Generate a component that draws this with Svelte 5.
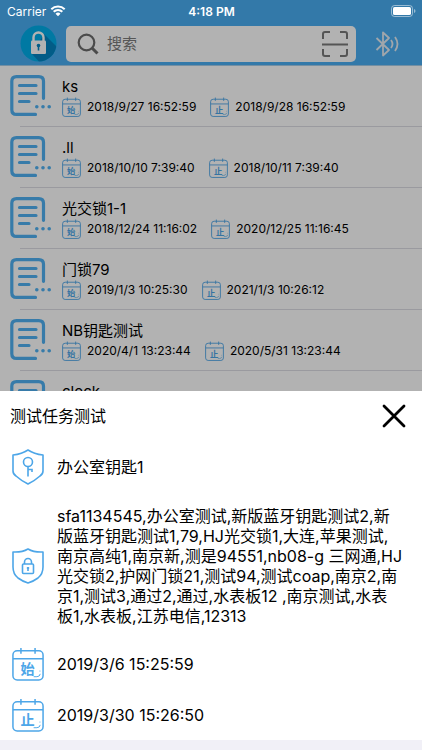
<script>
  const tasks = [
    { name: 'ks', start: '2018/9/27 16:52:59', end: '2018/9/28 16:52:59' },
    { name: '.ll', start: '2018/10/10 7:39:40', end: '2018/10/11 7:39:40' },
    { name: '光交锁1-1', start: '2018/12/24 11:16:02', end: '2020/12/25 11:16:45' },
    { name: '门锁79', start: '2019/1/3 10:25:30', end: '2021/1/3 10:26:12' },
    { name: 'NB钥匙测试', start: '2020/4/1 13:23:44', end: '2020/5/31 13:23:44' },
    { name: 'clock' }
  ];
  const locks = [
    'sfa1134545,办公室测试,新版蓝牙钥匙测试2,新',
    '版蓝牙钥匙测试1,79,HJ光交锁1,大连,苹果测试,',
    '南京高纯1,南京新,测是94551,nb08-g 三网通,HJ',
    '光交锁2,护网门锁21,测试94,测试coap,南京2,南',
    '京1,测试3,通过2,通过,水表板12 ,南京测试,水表',
    '板1,水表板,江苏电信,12313'
  ].join('\n');
</script>

{#snippet calendar(mark)}
  <svg class="calendar" viewBox="0 0 34 36" aria-hidden="true">
    <rect x="1" y="4" width="32" height="31" rx="4.5" />
    <path d="M1 12.500H33M9.500 1v6M24.500 1v6" />
    <path class="thin" d="M23 31.500h3.500q3 0 3.500-3M29.700 26v-1" />
    <text x="16.500" y="28.500" text-anchor="middle">{mark}</text>
  </svg>
{/snippet}

<div class="screen">
  <div class="status">
    <span class="carrier">Carrier
      <svg width="16" height="12" viewBox="0 0 16 12" aria-hidden="true">
        <path d="M1.300 4.300a9.500 9.500 0 0 1 13.400 0M3.700 6.800a6 6 0 0 1 8.600 0" fill="none" stroke="#fff" stroke-width="2" />
        <path d="M5.500 8.700a3.600 3.600 0 0 1 5 0L8 11.300z" fill="#fff" />
      </svg>
    </span>
    <span class="time">4:18 PM</span>
    <span class="power">
      <svg width="25" height="12" viewBox="0 0 25 12" aria-hidden="true">
        <rect x=".5" y=".5" width="21" height="11" rx="3" fill="none" stroke="#fff" stroke-opacity=".5" />
        <rect x="2" y="2" width="18" height="8" rx="1.600" fill="#fff" />
        <path d="M23 4v4q1.500-.5 1.500-2T23 4" fill="#fff" fill-opacity=".5" />
      </svg>
    </span>
  </div>

  <header>
    <button class="logo" aria-label="锁">
      <svg width="37" height="37" viewBox="0 0 37 37" aria-hidden="true">
        <defs><clipPath id="disc"><circle cx="18.500" cy="18.500" r="18" /></clipPath></defs>
        <circle cx="18.500" cy="18.500" r="18" fill="#00aeea" />
        <path clip-path="url(#disc)" d="M24 9 L42 27V42H24L12 29z" fill="#0384c2" />
        <path d="M13.500 16v-3.500a5 5 0 0 1 10 0V16" fill="none" stroke="#fff" stroke-width="2.400" />
        <rect x="11" y="15.500" width="15" height="13.500" rx="1.200" fill="#fff" />
        <circle cx="18.500" cy="20.500" r="1.800" fill="#0384c2" />
        <path d="M17.700 21h1.600v4.500h-1.600z" fill="#0384c2" />
      </svg>
    </button>
    <label class="search">
      <svg width="22" height="22" viewBox="0 0 22 22" fill="none" stroke="#6c6c6c" aria-hidden="true">
        <circle cx="9.500" cy="9.500" r="7.800" stroke-width="2.200" /><path d="M15 15l5.500 5.500" stroke-width="3" />
      </svg>
      <input type="search" placeholder="搜索" aria-label="搜索" />
      <button aria-label="扫描">
        <svg width="26" height="26" viewBox="0 0 26 26" fill="none" stroke="#7a7a7a" stroke-width="2" aria-hidden="true">
          <path d="M1 8V3q0-2 2-2h5M18 1h5q2 0 2 2v5M25 18v5q0 2-2 2h-5M8 25H3q-2 0-2-2v-5M0 13.500h26" />
        </svg>
      </button>
    </label>
    <button class="bluetooth" aria-label="蓝牙">
      <svg width="25" height="26" viewBox="0 0 25 26" fill="none" stroke="#e6eef5" stroke-width="1.800" aria-hidden="true">
        <path d="M1.500 7L14 19l-6 5.500V1.500L14 7 1.500 19" stroke-linejoin="round" />
        <path d="M16 9q3 4 0 8M20 6q5 7 0 14" />
      </svg>
    </button>
  </header>

  <ul class="tasks">
    {#each tasks as task}
      <li>
        <svg class="doc" width="42" height="42" viewBox="0 0 42 42" aria-hidden="true">
          <g fill="none" stroke="#4fb1f2" stroke-width="3.200" stroke-linecap="round">
            <path d="M25.500 39.400H6.500q-4.700 0-4.700-4.700V6.300q0-4.700 4.700-4.700h22.300q4.700 0 4.700 4.700v17" />
            <path d="M9.500 10.500h16.500M9.500 18.500h16.500M9.500 26.500h9.500" />
          </g>
          <g fill="#4fb1f2"><circle cx="26.800" cy="31.800" r="1.800" /><circle cx="33" cy="31.800" r="1.800" /><circle cx="39.200" cy="31.800" r="1.800" /></g>
        </svg>
        <div class="info">
          <div class="name">{task.name}</div>
          {#if task.start}
            <div class="dates">
              {@render calendar('始')}<time>{task.start}</time>
              {@render calendar('止')}<time>{task.end}</time>
            </div>
          {/if}
        </div>
      </li>
    {/each}
  </ul>

  <div class="backdrop">
    <div class="sheet" role="dialog" aria-modal="true" aria-labelledby="sheet-title">
      <div class="head">
        <h2 id="sheet-title">测试任务测试</h2>
        <button aria-label="关闭">
          <svg width="24" height="24" viewBox="0 0 24 24" aria-hidden="true"><path d="M2 2l20 20M22 2L2 22" stroke="#000" stroke-width="2.800" stroke-linecap="round" /></svg>
        </button>
      </div>
      <div class="row">
        <svg width="32" height="36" viewBox="0 0 32 36" fill="none" stroke="#4da6e8" stroke-width="1.600" aria-hidden="true">
          <path d="M16 1q6 4 15 5v16q0 3-3 5-5 4.500-12 8-7-3.500-12-8-3-2-3-5V6q9-1 15-5z" stroke-linejoin="round" />
          <circle cx="16" cy="13" r="4.500" /><path d="M16 17.500V27.500M16 20.500h4v2.500" />
        </svg>
        <p>办公室钥匙1</p>
      </div>
      <div class="row long">
        <svg width="32" height="36" viewBox="0 0 32 36" fill="none" stroke="#4da6e8" stroke-width="1.600" aria-hidden="true">
          <path d="M16 1q6 3.500 15 3v15q0 7-5 11-4 3-10 5-6-2-10-5-5-4-5-11V4q9 .5 15-3z" stroke-linejoin="round" />
          <rect x="10.500" y="16" width="11" height="9.500" rx="1" /><path d="M12.500 16v-2a3.500 3.500 0 0 1 7 0v2M16 19v4M14.800 20h2.400" />
        </svg>
        <p>{locks}</p>
      </div>
      <div class="row">{@render calendar('始')}<p>2019/3/6 15:25:59</p></div>
      <div class="row">{@render calendar('止')}<p>2019/3/30 15:26:50</p></div>
    </div>
  </div>
</div>

<style>
  .screen {
    position: relative;
    display: flex;
    flex-direction: column;
    height: 100vh;
    overflow: hidden;
    background: #fff;
    color: #000;
    font-family: Inter, "Noto Sans CJK SC", sans-serif;
  }
  button { padding: 0; border: 0; background: none; line-height: 0; }
  svg { flex: none; }
  .status {
    position: relative;
    z-index: 2;
    display: grid;
    grid-template-columns: 1fr auto 1fr;
    align-items: center;
    height: 22px;
    padding: 0 6px 0 7px;
    color: #fff;
    font-size: 12px;
  }
  .carrier { display: flex; align-items: center; gap: 4px; }
  .time { font-weight: 600; }
  .power { display: flex; justify-content: flex-end; }
  header {
    display: flex;
    align-items: center;
    margin-top: -22px;
    padding: 25px 22px 3px 20px;
    border-bottom: 1px solid #a5cdea;
    background: #4aaef3;
  }
  .search {
    display: flex;
    flex: 1;
    align-items: center;
    min-width: 0;
    height: 36px;
    margin: 0 19px 0 9px;
    padding: 0 8px 0 11px;
    border-radius: 5px;
    background: #fff;
  }
  input {
    flex: 1;
    width: 100%;
    min-width: 0;
    padding: 0 8px;
    border: 0;
    outline: 0;
    background: none;
    font: 15px Inter, "Noto Sans CJK SC", sans-serif;
  }
  input::placeholder { color: #7b7b7b; }
  .tasks { margin: 0; padding: 0; list-style: none; }
  li { position: relative; display: flex; gap: 10px; height: 61px; padding-left: 10px; }
  li::after {
    content: "";
    position: absolute;
    inset: auto 0 0 20px;
    height: 1px;
    background: #dddde4;
  }
  .doc { margin-top: 9px; }
  .info { flex: 1; padding-top: 11px; }
  .name { font-size: 15px; line-height: 20px; }
  .dates { display: flex; align-items: center; font-size: 12px; line-height: 20px; }
  .dates .calendar { width: 19px; height: 20px; }
  time { margin: 0 14px 0 6px; white-space: nowrap; }
  .calendar { width: 32px; height: 36px; fill: none; stroke: #4da6e8; stroke-width: 1.6; }
  .calendar .thin { stroke-width: 1; }
  .calendar text { fill: #4da6e8; stroke: none; font-size: 15px; font-weight: 700; }
  .backdrop {
    position: absolute;
    inset: 0;
    z-index: 1;
    display: flex;
    align-items: flex-end;
    background: rgb(0 0 0 / 30%);
  }
  .sheet { flex: 1; border-bottom: 10px solid #f1f0f7; background: #fff; font-size: 16px; line-height: 20px; }
  .head { display: flex; align-items: center; justify-content: space-between; height: 50px; padding: 0 16px 0 10px; }
  h2 { margin: 0; font-size: 16px; font-weight: 400; }
  .row { display: flex; align-items: center; gap: 13px; min-height: 51px; padding-left: 12px; }
  .long { padding-top: 14px; padding-bottom: 12px; }
  p { margin: 0; white-space: pre; }
</style>
